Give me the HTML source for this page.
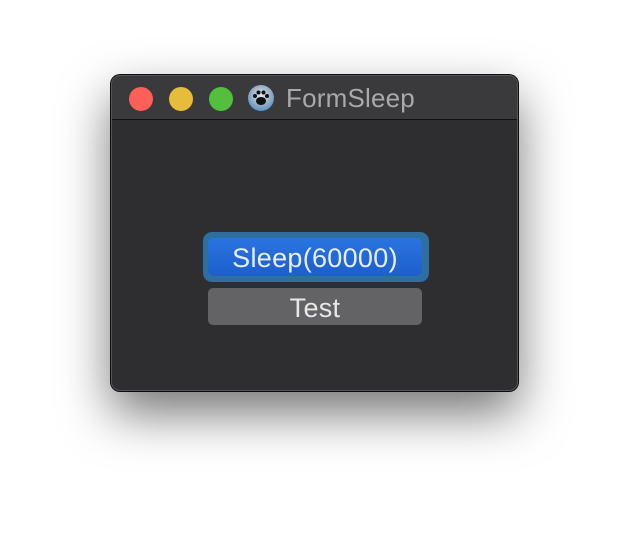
<!DOCTYPE html><html><head><style>
body{margin:0;width:630px;height:540px;background:#fff;position:relative;overflow:hidden;font-family:"Liberation Sans",sans-serif}
.win{position:absolute;left:111px;top:75px;width:405px;height:314px;background:#2e2e30;border:1px solid #555;border-radius:9px;box-shadow:0 22px 50px rgba(0,0,0,.55),0 0 0 1px #111;overflow:hidden}
.tb{height:43px;background:#3a3a3c;border-bottom:1px solid #111;position:relative}
.d{position:absolute;top:11px;width:24px;height:24px;border-radius:50%}
.t{position:absolute;left:174px;top:7px;color:#a9a9ab;font-size:26px;letter-spacing:0.2px}
.ic{position:absolute;left:136px;top:9px;width:26px;height:26px;border-radius:50%;background:radial-gradient(circle at 50% 40%,#dfe8f0 0,#8aa6c0 55%,#2f8ad8 90%)}
.ring{position:absolute;left:91px;top:156px;width:226px;height:50px;border-radius:9px;background:#2f6fa0}
.b1{position:absolute;left:96px;top:162px;width:214px;height:38px;border-radius:6px;background:linear-gradient(#2a74e0,#1d5fcc);color:#e6eefb;font-size:27px;letter-spacing:0.3px;text-align:center;line-height:41px}
.b2{position:absolute;left:96px;top:212px;width:214px;height:37px;border-radius:5px;background:#636365;color:#e8e8e8;font-size:27px;letter-spacing:0.3px;text-align:center;line-height:41px}
</style></head><body>
<div class="win"><div class="tb">
<div class="d" style="left:17px;background:#fe5f57"></div>
<div class="d" style="left:57px;background:#e5bd3b"></div>
<div class="d" style="left:97px;background:#52c03c"></div>
<div class="ic"><svg width="26" height="26" viewBox="0 0 26 26"><ellipse cx="13" cy="16" rx="5" ry="4" fill="#111"/><circle cx="7" cy="11" r="2" fill="#111"/><circle cx="10.5" cy="7.5" r="2" fill="#111"/><circle cx="15.5" cy="7.5" r="2" fill="#111"/><circle cx="19" cy="11" r="2" fill="#111"/></svg></div>
<div class="t">FormSleep</div></div>
<div class="ring"></div><div class="b1">Sleep(60000)</div>
<div class="b2">Test</div>
</div></body></html>
